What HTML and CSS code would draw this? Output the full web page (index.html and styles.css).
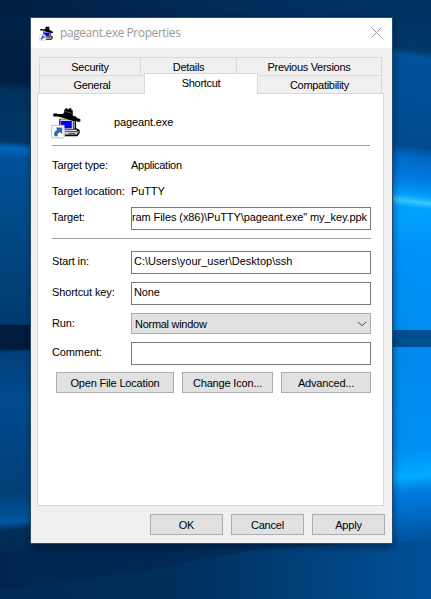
FILE: index.html
```html
<!DOCTYPE html>
<html lang="en">
<head>
<meta charset="utf-8">
<title>pageant.exe Properties</title>
<link rel="stylesheet" href="styles.css">
</head>
<body>
<svg class="wallpaper" viewBox="0 0 431 599" preserveAspectRatio="none" aria-hidden="true">
  <defs>
    <linearGradient id="left" gradientUnits="userSpaceOnUse" x1="0" y1="0" x2="0" y2="599">
      <stop offset="0" stop-color="#002348"/><stop offset=".135" stop-color="#001f41"/>
      <stop offset=".15" stop-color="#00325f"/><stop offset=".235" stop-color="#003765"/>
      <stop offset=".246" stop-color="#0067be"/><stop offset=".262" stop-color="#00529a"/>
      <stop offset=".40" stop-color="#004782"/><stop offset=".538" stop-color="#003a70"/>
      <stop offset=".547" stop-color="#001b3b"/><stop offset=".576" stop-color="#001b3b"/>
      <stop offset=".587" stop-color="#003f7b"/><stop offset=".66" stop-color="#004a8e"/>
      <stop offset=".82" stop-color="#004078"/><stop offset=".87" stop-color="#00559c"/>
      <stop offset=".884" stop-color="#002d58"/><stop offset="1" stop-color="#002248"/>
    </linearGradient>
    <linearGradient id="right" gradientUnits="userSpaceOnUse" x1="0" y1="0" x2="0" y2="599">
      <stop offset="0" stop-color="#003160"/><stop offset=".078" stop-color="#003869"/>
      <stop offset=".09" stop-color="#00529b"/><stop offset=".24" stop-color="#004b91"/>
      <stop offset=".256" stop-color="#0067c4"/><stop offset=".30" stop-color="#0080e4"/>
      <stop offset=".322" stop-color="#00a1ff"/><stop offset=".332" stop-color="#3ac4ff"/>
      <stop offset=".342" stop-color="#00a2ff"/><stop offset=".42" stop-color="#0091f8"/>
      <stop offset=".6" stop-color="#008aee"/>
      <stop offset=".75" stop-color="#008df4"/><stop offset=".80" stop-color="#00acff"/>
      <stop offset=".822" stop-color="#007ee2"/><stop offset=".87" stop-color="#0067c0"/>
      <stop offset=".90" stop-color="#0056a1"/><stop offset="1" stop-color="#004c8e"/>
    </linearGradient>
    <linearGradient id="floor" x1="0" y1="0" x2="1" y2="0">
      <stop offset="0" stop-color="#002a55"/><stop offset=".4" stop-color="#002e5b"/>
      <stop offset=".7" stop-color="#004079"/><stop offset="1" stop-color="#005199"/>
    </linearGradient>
    <linearGradient id="sky" x1="0" y1="0" x2="1" y2="0">
      <stop offset="0" stop-color="#001f41"/><stop offset=".5" stop-color="#002c59"/><stop offset="1" stop-color="#003463"/>
    </linearGradient>
  </defs>
  <path d="M0 543H392L431 524V599H0Z" fill="url(#floor)"/>
  <path d="M0 590L140 571L260 549L360 543H0Z" fill="#001f45" opacity=".3"/>
  <g transform="skewY(4)"><rect width="36" height="326" fill="url(#left)"/></g>
  <g transform="translate(0 2) skewY(-5)"><rect y="350" width="36" height="200" fill="url(#left)"/></g>
  <rect y="325" width="36" height="25" fill="#001b3b"/>
  <g transform="translate(391 0) skewY(7)"><rect x="-3" width="44" height="331" fill="url(#right)"/></g>
  <g transform="translate(391 0) skewY(-6)"><rect x="-3" y="347" width="44" height="196" fill="url(#right)"/></g>
  <rect x="388" y="330" width="43" height="17" fill="#004e92"/>
  <rect width="431" height="18" fill="url(#sky)"/>
</svg>
<main class="window">
  <header class="titlebar">
    <svg class="app-icon" viewBox="20 20 94 96"><use href="#agent"/></svg>
    <h1>pageant.exe Properties</h1>
    <svg class="close" viewBox="0 0 11 11"><path d="M.5.5l10 10M10.5.5l-10 10"/></svg>
  </header>
  <nav class="tabs">
    <div class="tab-row upper"><span>Security</span><span>Details</span><span>Previous Versions</span></div>
    <div class="tab-row lower"><span>General</span><span class="active">Shortcut</span><span>Compatibility</span></div>
  </nav>
  <section class="panel">
    <div class="identity">
      <svg class="file-icon" viewBox="20 20 94 96">
        <g id="agent">
          <path d="M45 55H96V83L107 89V98L100 108H62V88H45Z" fill="#000"/>
          <path d="M48 57H87V86H62V88H48Z" fill="#d0d0d0"/>
          <path d="M88 62H93V85H88Z" fill="#909090"/>
          <path d="M50 62H83V84H50Z" fill="#0000f8"/>
          <path d="M62 88H98V92H62Z" fill="#e4e4e4"/>
          <path d="M60 94H99V103H60Z" fill="#d0d0d0"/>
          <path d="M99 92H104V97L99 102Z" fill="#888"/>
          <path d="M73 98H94V100H73Z" fill="#000"/>
          <path d="M27 39H39V41H55L60 36V29L65 23H70V26H75V23H82V29H86V45L98 50V53L109 56V64H98V61H84L68 56L53 51L39 48H27Z" fill="#000"/>
          <path d="M62 33L83 38" stroke="#777" stroke-width="2"/>
          <path d="M22 75H60V113H22Z" fill="#fff" stroke="#b4b4b4" stroke-width="2.5"/>
          <path d="M31 108C27 98 32 91 39 89L35 82H54V101L48 96C41 97 39 101 40 108Z" fill="#2e68a8"/>
        </g>
      </svg>
      <span>pageant.exe</span>
    </div>
    <dl class="form">
      <div class="row type"><dt>Target type:</dt><dd>Application</dd></div>
      <div class="row location"><dt>Target location:</dt><dd>PuTTY</dd></div>
      <div class="row target"><dt>Target:</dt><dd class="field end"><span class="path">ram Files (x86)\PuTTY\pageant.exe" my_key.ppk</span></dd></div>
      <div class="row start"><dt>Start in:</dt><dd class="field"><span class="dir">C:\Users\your_user\Desktop\ssh</span></dd></div>
      <div class="row key"><dt>Shortcut key:</dt><dd class="field">None</dd></div>
      <div class="row run"><dt>Run:</dt><dd class="select"><span>Normal window</span><svg viewBox="0 0 10 6"><path d="M1 .8l4 4 4-4"/></svg></dd></div>
      <div class="row comment"><dt>Comment:</dt><dd class="field"></dd></div>
    </dl>
    <div class="actions"><button class="open">Open File Location</button><button class="change">Change Icon...</button><button class="advanced">Advanced...</button></div>
  </section>
  <footer><button>OK</button><button>Cancel</button><button>Apply</button></footer>
</main>
</body>
</html>
```
FILE: styles.css
```css
* { box-sizing: border-box; }
body {
  margin: 0;
  width: 431px;
  height: 599px;
  overflow: hidden;
  padding: 17px 0 0 30px;
  background: #003463;
  font: 11px/14px "Liberation Sans", Arial, sans-serif;
  letter-spacing: -.12px;
  color: #000;
}
.wallpaper { position: absolute; inset: 0; width: 431px; height: 599px; z-index: -1; }
.window {
  width: 363px;
  height: 527px;
  display: flex;
  flex-direction: column;
  background: #f0f0f0;
  border: 1px solid #244a70;
  box-shadow: 1px 3px 7px rgba(0, 10, 30, .45);
}
.titlebar { height: 30px; flex: none; display: flex; align-items: center; background: #fff; padding: 0 10px 0 8px; }
.app-icon { width: 15px; height: 15px; margin-right: 6px; }
h1 { margin: 0; font: 12px/16px "Open Sans", "Noto Sans", sans-serif; letter-spacing: -.42px; color: #999; }
.close { width: 11px; height: 11px; margin: -2px 0 0 auto; fill: none; stroke: #999; }
.tabs { padding: 9px 9px 0 8px; flex: none; height: 45px; letter-spacing: -.3px; }
.tab-row { display: grid; text-align: center; }
.tab-row span { border: 1px solid #d9d9d9; border-width: 1px 0 0 1px; white-space: nowrap; }
.tab-row span:last-child { border-right-width: 1px; }
.upper { grid-template-columns: 101px 96px 146px; height: 18px; line-height: 18px; }
.lower { grid-template-columns: 105px 114px 124px; height: 18px; line-height: 18px; }
.tab-row .active { margin-top: -2px; height: 21px; background: #fff; border-right-width: 1px; z-index: 1; }
.tab-row .active + span { border-left: 0; }
.panel { margin: 0 8px 0 6px; height: 413px; flex: none; background: #fff; border: 1px solid #d9d9d9; padding: 0 12px 0 14px; }
.identity { height: 52px; border-bottom: 1px solid #a0a0a0; margin-right: 1px; display: flex; padding-top: 13px; }
.file-icon { width: 31px; height: 32px; margin-left: -1px; }
.identity span { margin: 8px 0 0 32px; }
.form { margin: 0; }
.row { display: flex; }
dt { width: 79px; flex: none; white-space: nowrap; }
dd { margin: 0; }
.type { margin-top: 12px; height: 26px; }
.type dd, .select { letter-spacing: -.28px; }
.location { height: 23px; }
.target { height: 32px; border-bottom: 1px solid #a0a0a0; }
.row.target dt { padding-top: 3px; }
.field, .select { width: 240px; height: 23px; border: 1px solid #7a7a7a; padding: 2px; line-height: 14px; white-space: nowrap; }
.end { display: flex; justify-content: flex-end; padding-right: 3px; }
.path { letter-spacing: -.09px; }
.dir { letter-spacing: 0; }
.start { margin-top: 12px; height: 31px; }
.start dt, .key dt, .run dt, .comment dt { padding-top: 3px; }
.key { height: 31px; }
.run { height: 29px; }
.select { height: 21px; display: flex; align-items: center; justify-content: space-between; background: #e1e1e1; border-color: #adadad; padding: 0 3px; }
.select svg { width: 10px; height: 6px; fill: none; stroke: #444; }
.comment { height: 30px; }
button { font: inherit; letter-spacing: -.18px; color: #000; background: #e1e1e1; border: 1px solid #adadad; border-radius: 0; padding: 0; height: 21px; white-space: nowrap; }
.actions { display: flex; gap: 8px; margin-left: 4px; }
.open { width: 118px; }
.change { width: 91px; }
.advanced { width: 90px; }
footer { display: flex; justify-content: flex-end; gap: 8px; padding: 8px 7px 0 0; }
footer button { width: 73px; }
```
